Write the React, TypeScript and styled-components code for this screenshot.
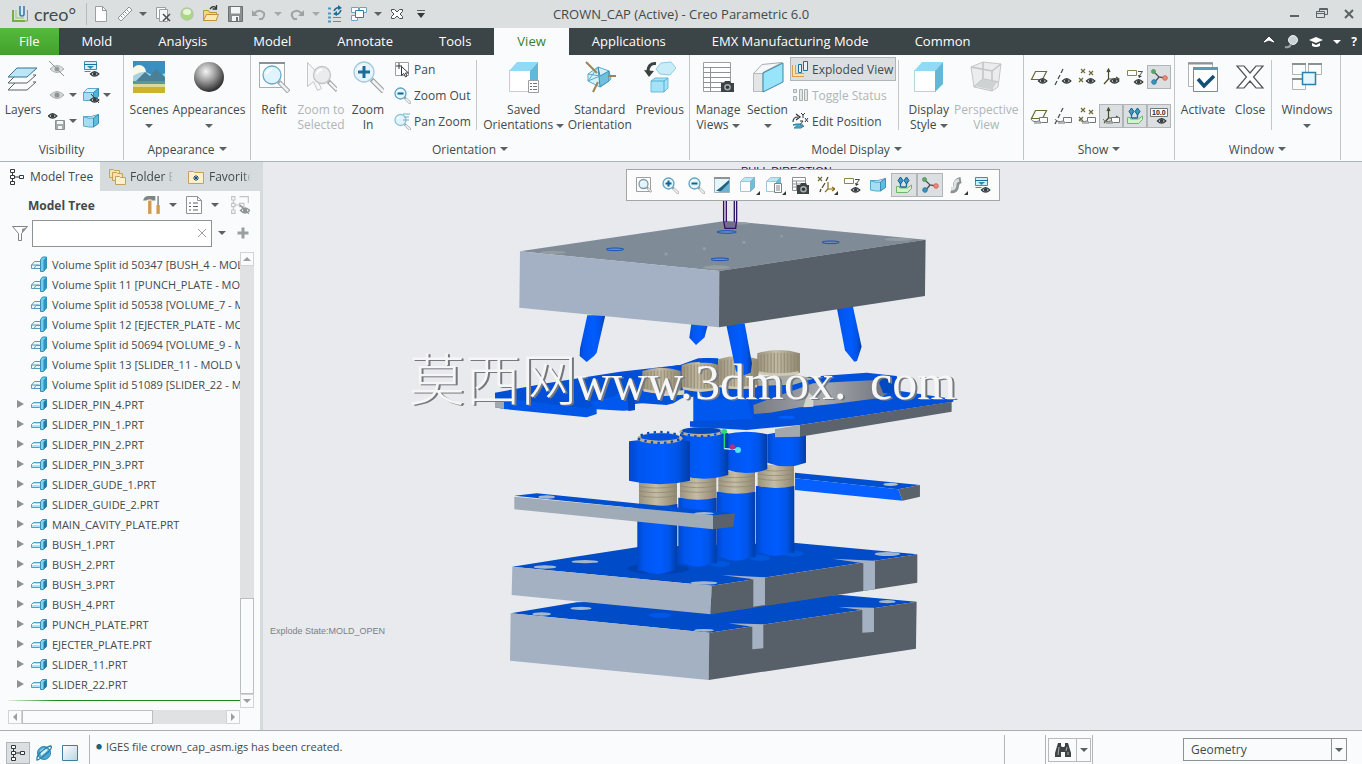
import React, { useState } from "react";
import styled, { createGlobalStyle, css } from "styled-components";

const GlobalStyle = createGlobalStyle`
  * {
    box-sizing: border-box;
  }

  body {
    margin: 0;
    font-family: "Open Sans", "Noto Sans", "Noto Sans CJK SC", sans-serif;
    font-size: 12px;
    line-height: 15px;
    color: #424a4c;
    background: #fafbfc;
  }

  button, input, select {
    font: inherit;
    color: inherit;
  }

  button {
    padding: 0;
    border: none;
    background: none;
  }

  svg {
    display: block;
    flex: none;
  }
`;

/* icons */

type IconProps = { size?: number; box?: number; children?: React.ReactNode };

const Icon = ({ size = 18, box = 18, children }: IconProps) => (
  <svg
    width={size}
    height={size}
    viewBox={`0 0 ${box} ${box}`}
    fill="none"
    stroke="#5b6264"
    aria-hidden="true"
  >
    {children}
  </svg>
);

const Big = ({ children }: { children: React.ReactNode }) => (
  <Icon size={32} box={32}>
    {children}
  </Icon>
);

const Eye = ({ x = 0, y = 0, color = "#333a3c" }) => (
  <g transform={`translate(${x} ${y})`} stroke={color}>
    <path d="M0.5 4Q4.500-0.800 8.800 4Q4.500 8.300 0.500 4Z" fill="#fff" strokeWidth="1.300" />
    <circle cx="4.600" cy="3.800" r="1.500" fill={color} />
  </g>
);

const Lens = ({ x = 0, y = 0, r = 5, grip = 6, color = "#6aaac8", fill = "#dff4fc" }) => (
  <g transform={`translate(${x} ${y})`}>
    <path d={`M${r * 0.75} ${r * 0.75}l${grip} ${grip}`} stroke="#9a9fa1" strokeWidth={r * 0.5} />
    <path d={`M${r * 0.75 + 1} ${r * 0.75 + 1}l${grip - 1.5} ${grip - 1.5}`} stroke="#f1f3f3" strokeWidth={r * 0.28} />
    <circle r={r} fill={fill} stroke={color} strokeWidth="1.300" />
    <path d={`M${-r * 0.6} ${-r * 0.1}a${r * 0.6} ${r * 0.6} 0 01${r * 0.6} ${-r * 0.5}`} stroke="#fff" strokeWidth={r * 0.2} />
  </g>
);

const Camera = ({ x = 0, y = 0 }) => (
  <g transform={`translate(${x} ${y})`} stroke="none">
    <path d="M0 3h3l1-2h5l1 2h3v9H0z" fill="#3d4345" />
    <circle cx="6.500" cy="7.300" r="3.300" fill="#aab0b2" />
    <circle cx="6.500" cy="7.300" r="1.800" fill="#33383a" />
  </g>
);

const Cross = ({ x, y, color = "#6e6a35" }: { x: number; y: number; color?: string }) => (
  <path d={`M${x} ${y}l4 4m0-4l-4 4`} stroke={color} strokeWidth="1.200" />
);

const CreoLogo = () => (
  <Icon>
    <path d="M2 5v11h12" stroke="#6fb244" strokeWidth="2" />
    <path d="M5 5v8h8" stroke="#a9d08f" strokeWidth="1.500" />
    <path d="M9 1v8a2 2 0 004 0V1" stroke="#3a7fa5" strokeWidth="1.600" fill="#d2ebf5" />
    <path d="M16.500 5v11H12" stroke="#6fb244" />
  </Icon>
);

const FileIcon = () => (
  <Icon>
    <path d="M3.500 1.500h7l4 4v11h-11z" fill="#fff" stroke="#9aa0a2" />
    <path d="M10.500 1.500v4h4" stroke="#8d9395" />
  </Icon>
);

const RulerIcon = () => (
  <Icon>
    <path d="M2 13L13 2l3 3L5 16z" fill="#fff" stroke="#8d9395" />
    <path d="M5 11l1.500 1.500M7 9l1.500 1.500M9 7l1.500 1.500M11 5l1.500 1.500" stroke="#7e8587" />
  </Icon>
);

const CloseFileIcon = () => (
  <Icon>
    <path d="M2.500 2.500h9v11h-9z" fill="#fff" stroke="#9aa0a2" />
    <path d="M5.500 4.500h8v12h-8z" fill="#f6f8f8" stroke="#9aa0a2" />
    <path d="M9 9l7 7m0-7l-7 7" stroke="#4a5052" strokeWidth="1.500" />
  </Icon>
);

const RegenIcon = () => (
  <Icon>
    <circle cx="9" cy="9" r="6" fill="#a9d97f" stroke="#b3c9a3" strokeWidth="1.500" />
    <ellipse cx="9" cy="7" rx="4" ry="3" fill="#e6f5d8" stroke="none" />
  </Icon>
);

const OpenIcon = () => (
  <Icon>
    <path d="M1.500 15.500v-10h5l1 2h7v8z" fill="#f5d48a" stroke="#c4923a" />
    <path d="M1.500 15.500l3-6h12l-2.500 6z" fill="#fce9b8" stroke="#c4923a" />
    <path d="M8 4q3-4 6-1M14.500 0v4h-4" stroke="#33383a" strokeWidth="1.300" />
  </Icon>
);

const SaveIcon = () => (
  <Icon>
    <path d="M2.500 1.500h14v15h-14z" fill="#8a9092" stroke="#6b7274" />
    <path d="M5 2h9v6.500H5zM6 11h7v5H6z" fill="#f4f6f6" stroke="none" />
    <path d="M10 12h2v4h-2z" fill="#6b7274" stroke="none" />
  </Icon>
);

const UndoIcon = ({ flip = false }) => (
  <Icon>
    <g transform={flip ? "translate(18 0) scale(-1 1)" : undefined} stroke="#9ea4a6" strokeWidth="2">
      <path d="M4 9q5-6 10-1 1 3-2 6H9" />
      <path d="M2 5v6h6z" fill="#9ea4a6" stroke="none" />
    </g>
  </Icon>
);

const RegenListIcon = () => (
  <Icon>
    <path d="M2 3.500h3M2 8.500h3M2 12.500h3M2 16.500h3" stroke="#4a98bd" strokeWidth="2" />
    <path d="M7 12.500h8M7 16.500h8" stroke="#7d8486" />
    <path d="M8 6q2-4 5-3M15 5q-2 5-5 4" stroke="#1b6d97" strokeWidth="1.600" />
    <path d="M12 0l4 3-4 2zM11 6l-4 3 4 2z" fill="#1b6d97" stroke="none" />
  </Icon>
);

const WindowsSmallIcon = () => (
  <Icon>
    <path d="M1.500 2.500h7v5h-7zM1.500 10.500h6v5h-6z" fill="#fff" stroke="#6aa6c2" />
    <path d="M9.500 2.500h7v5h-7z" fill="#fff" stroke="#6aa6c2" />
    <path d="M5.500 5.500h8v7h-8z" fill="#fff" stroke="#2b7fa8" />
  </Icon>
);

const CloseXIcon = () => (
  <Icon>
    <path d="M3.500 4.500h3L9 7l2.500-2.500h3v2L12 9l2.500 2.500v2h-3L9 11l-2.500 2.500h-3v-2L6 9 3.500 6.500z" fill="#fff" stroke="#4a5052" />
  </Icon>
);

const LayersIcon = () => (
  <Big>
    <path d="M1 29h19l9-8h-3M1 29l7-7" />
    <path d="M1 22h19l9-8h-3M1 22l7-7" fill="#fbfcfc" />
    <path d="M1 16l9-9h20l-10 9z" fill="#b9e7f8" stroke="#3b7390" />
  </Big>
);

const HideIcon = () => (
  <Icon>
    <path d="M2 9q7-7 14 0-7 7-14 0z" fill="#dcdfdf" stroke="#a9aeb0" />
    <circle cx="9" cy="9" r="2.500" fill="#9aa0a2" stroke="none" />
    <path d="M1 1l15 15" stroke="#8d9395" />
  </Icon>
);

const ShowIcon = () => (
  <Icon>
    <path d="M2 9q7-7 14 0-7 7-14 0z" fill="#d0d4d4" stroke="#a9aeb0" />
    <circle cx="9" cy="9" r="2.500" fill="#8d9395" stroke="none" />
  </Icon>
);

const EyeSaveIcon = () => (
  <Icon>
    <Eye x={0} y={0} />
    <path d="M7.500 8.500h9v9h-9z" fill="#a4a9ab" stroke="#8a9092" />
    <path d="M9 9h6v3H9zM10 14h4v3h-4z" fill="#f4f6f6" stroke="none" />
  </Icon>
);

const StatusEyeIcon = () => (
  <Icon>
    <path d="M2.500 1.500h12v8h-12z" fill="#d5eff9" stroke="#3a8fb5" />
    <path d="M2 4h13v1H2z" fill="#1d6f99" stroke="none" />
    <path d="M5 6h7l-3.500 3z" fill="#2b8fbd" stroke="none" />
    <path d="M2.500 11.500h6" stroke="#3a8fb5" />
    <Eye x={8} y={10} />
  </Icon>
);

const CurvedBlockIcon = () => (
  <Icon>
    <path d="M1.500 4.500q5 2.500 10 1.500v9q-5 .5-10-1z" fill="#a5def4" stroke="#5aa9c9" />
    <path d="M1.500 4.500q7 1 15-2l-5 3.500q-5 1-10-1.500z" fill="#e3f6fc" stroke="#5aa9c9" />
    <path d="M11.500 6l5-3.500v9l-5 3.500z" fill="#62bcdd" stroke="#3a8fb5" />
  </Icon>
);

const BlockHiddenIcon = () => (
  <Icon>
    <path d="M1.500 6.500h10v8h-10z" fill="#a5def4" stroke="#5aa9c9" />
    <path d="M1.500 6.500l4-4h11l-5 4z" fill="#d5f1fb" stroke="#5aa9c9" />
    <path d="M11.500 6.500l5-4v8l-5 4z" fill="#4fb2d8" stroke="#3a8fb5" />
    <Eye x={8} y={10} />
    <path d="M9 8l8 9" stroke="#333a3c" />
  </Icon>
);

const ScenesIcon = () => (
  <Big>
    <g stroke="none">
      <path d="M0 0h32v32H0z" fill="#3a8fc0" />
      <circle cx="6" cy="11" r="7" fill="#fdf8e4" />
      <path d="M0 15q10-7 17-2t15-1v9H0z" fill="#a9d3e2" />
      <path d="M3 20l9-9 5 4 6-7 9 8v6H3z" fill="#4a7f98" />
      <path d="M0 20h32v5H0z" fill="#5e9a8c" />
      <path d="M0 23h32v9H0z" fill="#c9b32f" />
      <path d="M0 23h32v3H0z" fill="#d9dc98" />
    </g>
  </Big>
);

const SphereIcon = () => (
  <Big>
    <defs>
      <radialGradient id="ball" cx="40%" cy="32%" r="66%">
        <stop offset="0" stopColor="#f4f4f4" />
        <stop offset="0.500" stopColor="#9a9a9a" />
        <stop offset="1" stopColor="#333" />
      </radialGradient>
    </defs>
    <circle cx="16" cy="16" r="15" fill="url(#ball)" stroke="none" />
  </Big>
);

const RefitIcon = () => (
  <Big>
    <path d="M1.500 1.500h25v25h-25z" fill="#fcfdfd" stroke="#a9aeb0" />
    <path d="M1 2h26" stroke="#8b9193" strokeWidth="2" />
    <Lens x={14} y={14} r={9} grip={10} />
  </Big>
);

const ZoomSelectedIcon = () => (
  <Big>
    <path d="M2.500 1.500v24l6-5 4 9 4-2-4-8h7z" fill="#f5f6f6" stroke="#c3c7c9" />
    <Lens x={17} y={14} r={8.500} grip={9} color="#c0c4c6" fill="#ebeded" />
  </Big>
);

const ZoomInIcon = () => (
  <Big>
    <Lens x={12} y={11} r={10} grip={14} color="#a3cbdc" fill="#e6f4fa" />
    <path d="M12 5v12M6 11h12" stroke="#1d6b97" strokeWidth="3" />
  </Big>
);

const PanIcon = () => (
  <Icon>
    <path d="M2.500 2.500h13v13h-13z" fill="#fff" stroke="#9aa0a2" />
    <path d="M6 3v6M3 6h6" stroke="#33383a" />
    <path d="M8.500 6.500v9l2.300-2 1.700 3.500 1.500-1-1.500-3h3z" fill="#fff" stroke="#33383a" />
  </Icon>
);

const ZoomOutIcon = () => (
  <Icon>
    <Lens x={7.500} y={7.500} r={5.500} grip={6} color="#5fa3c2" fill="#e3f5fc" />
    <path d="M4.500 7.500h6" stroke="#14618c" strokeWidth="2" />
  </Icon>
);

const ZoomInSmallIcon = () => (
  <Icon>
    <Lens x={7.500} y={7.500} r={5.500} grip={6} color="#5fa3c2" fill="#e3f5fc" />
    <path d="M4.500 7.500h6M7.500 4.500v6" stroke="#14618c" strokeWidth="2" />
  </Icon>
);

const PanZoomIcon = () => (
  <Icon>
    <Lens x={7.500} y={8} r={5.500} grip={6} color="#8cc3d9" fill="#dff4fc" />
    <path d="M10 2h7M11 5h5M10 8h6" stroke="#6bb0cc" />
  </Icon>
);

const RefitSmallIcon = () => (
  <Icon>
    <path d="M1.500 1.500h14v14h-14z" fill="#fff" stroke="#9aa0a2" />
    <Lens x={8.500} y={8} r={4.500} grip={4.500} color="#7f9aa5" />
  </Icon>
);

const CubeShape = () => (
  <g stroke="none">
    <path d="M1.500 9.500h21v21h-21z" fill="#fff" stroke="#b9d3dd" />
    <path d="M1 10l8-9h21l-8 9z" fill="#8fdaf4" />
    <path d="M22 10l8-9v22l-8 8z" fill="#62b8d9" />
  </g>
);

const SavedOrientationIcon = () => (
  <Big>
    <CubeShape />
    <path d="M20.500 19.500h10v12h-10z" fill="#fff" stroke="#9aa0a2" />
    <path d="M22 22.500h2M25 22.500h4M22 25.500h2M25 25.500h4M22 28.500h2M25 28.500h4" stroke="#6f7678" />
  </Big>
);

const DisplayStyleIcon = () => (
  <Big>
    <CubeShape />
  </Big>
);

const StandardOrientationIcon = () => (
  <Big>
    <path d="M4 13l10-7 11 4 2 8-11 8-12-6z" fill="#d5f2fb" stroke="#5aa9c9" />
    <path d="M14 6l2 9 9-5v10l-9 6z" fill="#6fbfdd" stroke="#3a8fb5" />
    <path d="M4 13l12 2M4 20l10-14M16 15l-12 5" stroke="#5aa9c9" />
    <path d="M2 1l11 11M9 31l5-10M24 15h9" stroke="#9b8457" strokeWidth="2" />
  </Big>
);

const PreviousIcon = () => (
  <Big>
    <path d="M12 8l5-6 10-1 5 6-6 7-10-1z" fill="#c8edf9" stroke="#8fcbe2" />
    <path d="M7 20l4-3h13v10l-4 4H7z" fill="#a5e2f7" stroke="#6dbbd9" />
    <path d="M7 20h13v11M20 20l4-3" stroke="#55afd2" />
    <path d="M12 2.500Q4 2 4 11" stroke="#3c4244" strokeWidth="3" />
    <path d="M0 9l10 1-5 6z" fill="#3c4244" stroke="none" />
  </Big>
);

const ManageViewsIcon = () => (
  <Big>
    <path d="M1.500 1.500h27v29h-27z" fill="#fff" stroke="#9aa0a2" />
    <path d="M1 6.500h28M1 11.500h28M1 16.500h28M1 21.500h28M1 26.500h28M8.500 6v24" stroke="#8d9395" />
    <Camera x={19} y={19} />
  </Big>
);

const SectionIcon = () => (
  <Big>
    <path d="M1.500 12.500L10 3.500l20-2-19 10v19H1.500z" fill="#f6f7f8" stroke="#a6abad" />
    <path d="M1.500 12.500H11v18H1.500z" fill="#e3e5e7" stroke="#b6bbbd" />
    <path d="M11 12l20-10v19L11 31z" fill="#97e4fb" stroke="#3b85a6" />
  </Big>
);

const ExplodedIcon = () => (
  <Icon>
    <path d="M3 5v10h10" stroke="#d2a050" strokeWidth="4" />
    <path d="M3 5v10h10" stroke="#fbe3a8" strokeWidth="2" />
    <path d="M7.500 4.500h3v8h-3zM12.500 1.500h4v9h-4z" fill="#e3f5fc" stroke="#1b6d97" />
  </Icon>
);

const ToggleStatusIcon = () => (
  <Icon>
    <path d="M2.500 3.500h3v3h-3zM2.500 10.500h3v4h-3zM8.500 3.500h3v11h-3zM13.500 3.500h3v11h-3z" fill="#e3e5e6" stroke="#a9aeb0" />
  </Icon>
);

const EditPositionIcon = () => (
  <Icon>
    <path d="M2 10q0-5 5-5M5 2l4 3-4 3" stroke="#33383a" strokeWidth="1.200" />
    <path d="M14 6l3 4m0-4l-3 4M10 1l2 2 2-2M12 3v3M9 9h3l-3 4h3" stroke="#33383a" />
    <path d="M2 13l3-1h5l-2 1zM3 16l3-2h7l-3 2z" fill="#5fbce0" stroke="#2b7fa8" />
  </Icon>
);

const PerspectiveIcon = () => (
  <Big>
    <path d="M1 6L13 1l18 2-3 23-6 4L4 26z" fill="#ebecec" stroke="#c3c7c9" />
    <path d="M1 6l21 4 9-7M22 10v20M13 1v17l15 3M4 26l9-8" stroke="#c0c4c6" strokeWidth="1.500" />
    <path d="M5 25l8-7 14 3-5 8z" fill="#cfd2d3" stroke="none" />
  </Big>
);

const ShowPlane = () => <path d="M5.500 3.500h11l-4 8H1.500z" stroke="#6e6a35" strokeWidth="1.200" />;
const ShowAxis = () => <path d="M9 1L7 5M6 7l-2 4M3 13l-2 4" stroke="#4a5052" strokeWidth="1.300" />;
const ShowPoints = () => (
  <>
    <Cross x={3} y={1} />
    <Cross x={11} y={3} />
    <Cross x={1} y={10} />
  </>
);
const ShowCsys = () => (
  <path d="M6.500 2v9H16M6.500 11L2 16M5 4l1.500-3L8 4M14 9l3 2-3 2" stroke="#4a4d2c" strokeWidth="1.200" />
);
const TagMark = () => (
  <>
    <path d="M9.500 10.500h8v5h-6l-2-1z" fill="#fff" stroke="#6f7678" />
    <path d="M1 12q2 4 8 2M4 16h7" stroke="#6f7678" />
  </>
);

const NoteEyeIcon = () => (
  <Icon>
    <path d="M1.500 2.500h9v5h-9z" fill="#fff" stroke="#8a8650" />
    <path d="M12 3.500h4.500l-3 4" stroke="#4a5052" />
    <path d="M12 7l4 1-3 2z" fill="#33383a" stroke="none" />
    <Eye x={8} y={10} />
  </Icon>
);

const SpinCenterIcon = () => (
  <Icon>
    <path d="M3 3l6 6 6 1M9 9l-5 6" stroke="#4a5052" strokeWidth="1.300" />
    <circle cx="3.500" cy="3.500" r="2" fill="#58a868" stroke="#5f9a6a" />
    <circle cx="4" cy="14" r="2.300" fill="#3a93bd" stroke="#2b7fa8" />
    <circle cx="15" cy="10" r="2.300" fill="#ee8a76" stroke="#cf6a57" />
  </Icon>
);

const PullIcon = () => (
  <Icon>
    <path d="M1.500 10.500v6h11l4-4v-3.500l-4 3h-8v-1.500z" fill="#d3f2cb" stroke="#6fb56f" />
    <path d="M5.500 11V6M11.500 11V6M5.500 11h6" stroke="#1d6b97" strokeWidth="1.300" />
    <path d="M5.500 1L3 4.500 5.500 8 8 4.500zM11.500 1L9 4.500 11.500 8 14 4.500z" fill="#3d97bf" stroke="#0f5f8a" />
  </Icon>
);

const DimIcon = () => (
  <Icon>
    <path d="M0.500 1.500h17v8H.5z" fill="#fff" stroke="#6f7678" />
    <text x="2" y="8" fontSize="7" fontWeight="700" fill="#222" stroke="none" fontFamily="Liberation Sans, sans-serif">
      10.0
    </text>
    <Eye x={7} y={10} />
  </Icon>
);

const ActivateIcon = () => (
  <Big>
    <path d="M1.500 1.500h24v24h-24z" fill="#fff" stroke="#b0b5b7" />
    <path d="M1 2.500h25" stroke="#8d9395" strokeWidth="2" />
    <path d="M6.500 6.500h24v24h-24z" fill="#fff" stroke="#5d94ae" />
    <path d="M6 7.500h25" stroke="#5d9ab8" strokeWidth="3" />
    <path d="M11 18l6 7 10-10" stroke="#144e74" strokeWidth="3.500" />
  </Big>
);

const CloseBigIcon = () => (
  <Big>
    <path d="M3 5h7l6 7 6-7h7L19.500 16 29 27h-7l-6-7-6 7H3l9.500-11z" fill="#fff" stroke="#4f5658" strokeWidth="1.200" />
  </Big>
);

const WindowsIcon = () => (
  <Big>
    <path d="M1.500 2.500h13v11h-13zM17.500 2.500h13v11h-13zM1.500 17.500h13v11h-13z" fill="#fbfcfc" stroke="#b0b5b7" />
    <path d="M1 3h14M17 3h14M1 18h14" stroke="#8b9193" strokeWidth="2" />
    <path d="M11.500 11.500h13v12h-13z" fill="#e5f6fc" stroke="#2b7fa8" strokeWidth="1.500" />
  </Big>
);

const ShadeIcon = () => (
  <Icon>
    <path d="M1.500 1.500h15v15h-15z" fill="#e6f5fa" stroke="#9fb4bd" />
    <path d="M1 1h16v2H1z" fill="#8d9395" stroke="none" />
    <path d="M16 6v10H5z" fill="#6db3cf" stroke="none" />
    <path d="M8 11l8-7v3l-8 8H3z" fill="#205f80" stroke="none" />
  </Icon>
);

const MiniCube = ({ list = false }) => (
  <Icon>
    <path d="M1.500 5.500h10v10h-10z" fill="#fff" stroke="#a3c6d4" />
    <path d="M1.500 5.500l4-4h10l-4 4z" fill="#b9e7f7" stroke="#a3c6d4" />
    <path d="M11.500 5.500l4-4v10l-4 4z" fill="#70bddb" stroke="#7fb5ca" />
    {list && (
      <>
        <path d="M9.500 7.500h7v9h-7z" fill="#fff" stroke="#7d8486" />
        <path d="M11 10h4M11 12h4M11 14h4" stroke="#7d8486" />
      </>
    )}
  </Icon>
);

const ManageSmallIcon = () => (
  <Icon>
    <path d="M1.500 1.500h13v13h-13zM1 5h14M1 8h14M1 11h14M5.500 5v10" fill="#fff" stroke="#8d9395" />
    <Camera x={6} y={6} />
  </Icon>
);

const DatumIcon = () => (
  <Icon>
    <Cross x={1} y={1} />
    <path d="M11 1L9 5M8 7l-3 5M4 13l-1 3" stroke="#4a4d2c" strokeWidth="1.300" />
    <path d="M11 6v7h6M11 13l-3 3M15 11l3 2-3 2" stroke="#8a6d20" strokeWidth="1.200" />
  </Icon>
);

const SnakeIcon = () => (
  <Icon>
    <path d="M4 14q5 1 5-4t5-6" stroke="#8d9294" strokeWidth="6" />
    <path d="M4 13q4 0 4-4t4-5" stroke="#dfe1e1" strokeWidth="3" />
  </Icon>
);

const TreeIcon = () => (
  <Icon>
    <path d="M2.500 1.500h4v3h-4zM2.500 7.500h4v3h-4zM2.500 13.500h4v3h-4zM11.500 7.500h4v3h-4z" fill="#fff" stroke="#33383a" />
    <path d="M4.500 5v2M4.500 11v2M7 9h4" stroke="#33383a" />
  </Icon>
);

const FoldersIcon = ({ star = false }) => (
  <Icon>
    {!star && <path d="M1.500 9.500v-8h4l1 1h5v7z" fill="#f9e3ad" stroke="#c4a05a" />}
    {!star && <path d="M4.500 12.500v-8h4l1 1h5v7z" fill="#f9e3ad" stroke="#c4a05a" />}
    <path d={star ? "M1.500 15.500v-12h5l1 1h9v11z" : "M7.500 16.500v-8h4l1 1h5v7z"} fill="#fdf0cb" stroke="#c4a05a" />
    {star && <path d="M9 7v6M6 10h6M7 8l4 4M11 8l-4 4" stroke="#144e74" />}
  </Icon>
);

const ToolsIcon = () => (
  <Icon size={20}>
    <path d="M1 5q1-4 5-4h6v4H8.500v-1H5.500L4 5z" fill="#7d8486" stroke="none" />
    <path d="M7 5v12" stroke="#cf9a4c" strokeWidth="3" />
    <path d="M14.500 1v8" stroke="#8d9395" strokeWidth="1.500" />
    <path d="M14.500 9v8" stroke="#cf9a4c" strokeWidth="3" />
  </Icon>
);

const ListPageIcon = () => (
  <Icon>
    <path d="M1.500 0.500h11l4 4v13h-15z" fill="#fff" stroke="#8d9395" />
    <path d="M4 7h2M8 7h5M4 10.500h2M8 10.500h5M4 14h2M8 14h5" stroke="#5b6264" />
    <path d="M12.500.5v4h4" stroke="#8d9395" />
  </Icon>
);

const TreeHiddenIcon = () => (
  <Icon size={20}>
    <path d="M1.500 1.500h3v3h-3zM1.500 7.500h3v3h-3zM1.500 13.500h3v3h-3zM8.500 1.500h8v6M8.500 7.500h4v3h-4zM5 9h3M3 5v2M3 11v2" stroke="#c0c4c6" />
    <Eye x={9} y={10} color="#8d9395" />
    <path d="M9 9l8 8" stroke="#8d9395" />
  </Icon>
);

const FunnelIcon = () => (
  <Icon>
    <path d="M1.500 2.500h15l-6 7v7h-3v-7z" fill="#fff" stroke="#7d8486" />
    <path d="M11 5l5-2-5 6v7z" fill="#8d9395" stroke="none" />
  </Icon>
);

const SplitIcon = () => (
  <Icon size={16} box={16}>
    <path d="M.5 9l3-3.500h6v7h-9z" fill="#eef7fb" stroke="#5d97b3" />
    <path d="M.5 9h8M3 12.500l2-3h4" stroke="#5d97b3" />
    <path d="M9.500 3.500l2-2.500h4v11l-3 3.500h-3z" fill="#6fcdee" stroke="#3a8fb5" />
    <path d="M12.500 4l3-3v11l-3 3.500z" fill="#2f93bf" stroke="none" />
  </Icon>
);

const PartIcon = () => (
  <Icon size={16} box={16}>
    <path d="M.5 8.500l2-2h7v4l-1 1h-8z" fill="#a9e6fa" stroke="#4f9fc2" />
    <path d="M1 8.500h8" stroke="#f2fbfe" />
    <path d="M9.500 5.500l2-2h4v7l-3 3h-3z" fill="#7fd4f0" stroke="#3a8fb5" />
    <path d="M12.500 6l3-2.500v7l-3 3z" fill="#2278a3" stroke="none" />
  </Icon>
);

const BrowserIcon = () => (
  <Icon>
    <circle cx="9" cy="9" r="6.500" fill="#4aa8d6" stroke="#3585ab" />
    <path d="M5 7q4-5 8-1l-3 3-4 3z" fill="#d5f0fa" stroke="none" />
    <path d="M2 16q-1-4 5-9t9-5q2 2-5 8t-9 6z" stroke="#2b7fa8" strokeWidth="1.300" />
  </Icon>
);

const SquareIcon = () => (
  <Icon>
    <defs>
      <linearGradient id="pane" x2="1" y2="1">
        <stop offset="0" stopColor="#fff" />
        <stop offset="1" stopColor="#b7d5e2" />
      </linearGradient>
    </defs>
    <path d="M1.500 1.500h15v15h-15z" fill="url(#pane)" stroke="#3f7f9e" />
  </Icon>
);

const BinocularsIcon = () => (
  <Icon>
    <path d="M4 2h3v3l1 1h2l1-1V2h3l3 10v4h-6v-5H7v5H1v-4z" fill="#3d4345" stroke="none" />
    <path d="M5 6l-1 8M13 6l-1 4M14 11v3" stroke="#a9aeb0" />
  </Icon>
);

/* title bar */

const Page = styled.div`
  display: flex;
  flex-direction: column;
  height: 100vh;
  min-width: 1340px;
`;

const TitleBar = styled.header`
  display: grid;
  grid-template-columns: 1fr auto 1fr;
  align-items: center;
  height: 28px;
  background: #dbdfe0;
`;

const QuickTools = styled.div`
  display: flex;
  align-items: center;
  padding-left: 11px;
`;

const Brand = styled.span`
  display: flex;
  align-items: center;
  gap: 5px;
  width: 76px;
  height: 22px;
  border-right: 1px solid #b6bbbd;
  font-family: Lato, sans-serif;
  font-size: 18px;
`;

const ToolButton = styled.button<{ $w?: number }>`
  display: flex;
  align-items: center;
  justify-content: center;
  width: ${({ $w }) => $w || 24}px;
  height: 24px;
`;

const Caret = styled.span<{ $light?: boolean }>`
  display: inline-block;
  border: 4px solid transparent;
  border-top-color: ${({ $light }) => ($light ? "#a4aaac" : "#5b6264")};
  border-bottom-width: 0;
  vertical-align: middle;
`;

const TitleText = styled.h1`
  margin: 0;
  font-size: 13px;
  font-weight: 400;
`;

const WindowControls = styled.div`
  display: flex;
  justify-content: flex-end;
`;

/* tabs */

const TabBar = styled.nav`
  display: flex;
  height: 27px;
  background: #3b4446;
`;

const Tab = styled.button<{ $kind?: "file" | "active" }>`
  padding: 0 23px;
  font-size: 13px;
  color: #fff;

  ${({ $kind }) =>
    $kind === "file" &&
    css`
      padding: 0 19px;
      background: linear-gradient(#55bb3c, #43a02c);
    `}

  ${({ $kind }) =>
    $kind === "active" &&
    css`
      color: #3f7d2c;
      background: #fafbfc;
    `}
`;

const TabTools = styled.div`
  display: flex;
  align-items: center;
  margin-left: auto;
  color: #fff;
`;

/* ribbon */

const Ribbon = styled.div`
  display: flex;
  flex: none;
  height: 107px;
  padding-bottom: 1px;
  border-bottom: 1px solid #aab4b8;
  background: #fafbfc;
`;

const Group = styled.section<{ $w: number }>`
  display: flex;
  flex-direction: column;
  flex: none;
  width: ${({ $w }) => $w}px;
  padding-top: 1px;
  border-right: 1px solid #bfc4c6;
`;

const GroupBody = styled.div`
  display: flex;
  height: 83px;
`;

const GroupLabel = styled.div`
  display: flex;
  align-items: center;
  justify-content: center;
  gap: 4px;
  height: 20px;
`;

const Divider = styled.span`
  width: 1px;
  height: 70px;
  margin: 4px 2px 0;
  background: #c3c8ca;
`;

const BigButton = styled.button<{ $w: number }>`
  display: flex;
  flex-direction: column;
  align-items: center;
  width: ${({ $w }) => $w}px;
  padding-top: 5px;
  white-space: nowrap;

  > svg {
    margin-bottom: 9px;
  }

  &:disabled {
    color: #b0b5b7;
  }
`;

const Column = styled.div`
  display: flex;
  flex-direction: column;
  align-items: flex-start;
  gap: 2px;
  padding: 1px 0 0 1px;
`;

const SmallButton = styled.button<{ $pressed?: boolean }>`
  display: flex;
  align-items: center;
  gap: 3px;
  height: 24px;
  padding-right: 2px;
  border: 1px solid transparent;
  white-space: nowrap;

  ${({ $pressed }) =>
    $pressed &&
    css`
      border-color: #b0b5b7;
      background: #dcdfe2;
    `}

  &:disabled {
    color: #b0b5b7;
  }
`;

const ShowGrid = styled.div`
  display: grid;
  grid-template-columns: repeat(6, 24px);
  grid-auto-rows: 24px;
  row-gap: 15px;
  padding: 9px 3px 0;
`;

const IconButton = styled.button<{ $pressed?: boolean }>`
  display: flex;
  align-items: center;
  justify-content: center;
  border: 1px solid ${({ $pressed }) => ($pressed ? "#b0b5b7" : "transparent")};
  background: ${({ $pressed }) => ($pressed ? "#dcdfe2" : "none")};
`;

type BigProps = {
  w: number;
  icon: React.ReactNode;
  lines: string[];
  caret?: "inline" | "below";
  disabled?: boolean;
};

const BigTool = ({ w, icon, lines, caret, disabled }: BigProps) => (
  <BigButton $w={w} disabled={disabled}>
    {icon}
    {lines.map((line, i) => (
      <span key={line}>
        {line}
        {caret === "inline" && i === lines.length - 1 && (
          <>
            {" "}
            <Caret />
          </>
        )}
      </span>
    ))}
    {caret === "below" && (
      <span>
        <Caret />
      </span>
    )}
  </BigButton>
);

const withEye = (shape: React.ReactNode) => (
  <Icon>
    {shape}
    <Eye x={8} y={9} />
  </Icon>
);

const withTag = (shape: React.ReactNode) => (
  <Icon>
    {shape}
    <TagMark />
  </Icon>
);

const showTools: [string, React.ReactNode, boolean][] = [
  ["Plane Display", withEye(<ShowPlane />), false],
  ["Axis Display", withEye(<ShowAxis />), false],
  ["Point Display", withEye(<ShowPoints />), false],
  ["Csys Display", withEye(<ShowCsys />), false],
  ["Annotation Display", <NoteEyeIcon />, false],
  ["Spin Center", <SpinCenterIcon />, true],
  ["Plane Tags", withTag(<ShowPlane />), false],
  ["Axis Tags", withTag(<ShowAxis />), false],
  ["Point Tags", withTag(<ShowPoints />), false],
  ["Csys Tags", withTag(<ShowCsys />), true],
  ["Pull Direction", <PullIcon />, true],
  ["Dimensions", <DimIcon />, true]
];

/* side panel */

const Workspace = styled.main`
  display: flex;
  flex: 1;
  min-height: 0;
`;

const SidePanel = styled.aside`
  display: flex;
  flex-direction: column;
  flex: none;
  width: 263px;
  border-right: 3px solid #d5dadd;
`;

const PanelTabs = styled.div`
  display: flex;
  flex: none;
  height: 29px;
  background: #d6dcde;
`;

const PanelTab = styled.button<{ $w: number; $active?: boolean }>`
  display: flex;
  align-items: center;
  gap: 4px;
  flex: none;
  width: ${({ $w }) => $w}px;
  padding: 0 6px 0 8px;
  white-space: nowrap;
  background: ${({ $active }) => ($active ? "#fafbfc" : "none")};
`;

const PanelTabText = styled.span<{ $fade?: boolean }>`
  overflow: hidden;
  mask-image: ${({ $fade }) => ($fade ? "linear-gradient(to left, transparent, #000 8px)" : "none")};
`;

const PanelHead = styled.div`
  display: flex;
  align-items: center;
  flex: none;
  height: 28px;
  padding: 0 4px 0 28px;

  h2 {
    flex: 1;
    margin: 0;
    font-size: 12px;
  }
`;

const FilterRow = styled.div`
  display: flex;
  align-items: center;
  flex: none;
  height: 28px;
  padding: 0 6px 0 11px;
`;

const FilterBox = styled.div`
  display: flex;
  align-items: center;
  flex: 1;
  height: 27px;
  margin-left: 3px;
  border: 1px solid #8d9395;
  background: #fff;

  input {
    flex: 1;
    min-width: 0;
    border: none;
    outline: none;
    background: none;
  }
`;

const TreeArea = styled.div`
  display: grid;
  flex: 1;
  grid-template-columns: minmax(0, 1fr) 14px;
  grid-template-rows: minmax(0, 1fr) 14px;
  row-gap: 2px;
  min-height: 0;
  padding: 5px 6px 6px 8px;
`;

const Tree = styled.ul`
  margin: 0;
  padding: 2px 0 0;
  overflow: hidden;
  list-style: none;
  font-size: 11px;
`;

const Row = styled.li`
  display: flex;
  align-items: center;
  height: 20px;
  white-space: nowrap;
`;

const Expander = styled.span<{ $hidden?: boolean }>`
  margin: 0 7px 0 9px;
  border: 4px solid transparent;
  border-right-width: 0;
  border-left: 7px solid #8d9395;
  visibility: ${({ $hidden }) => ($hidden ? "hidden" : "visible")};
`;

const RowLabel = styled.span`
  margin-left: 5px;
`;

const InsertLine = styled.li`
  height: 1px;
  margin-top: 6px;
  background: linear-gradient(to right, #e3f0e0, #1c8a1c 20%);
`;

const Scrollbar = styled.div<{ $vertical?: boolean }>`
  display: flex;
  flex-direction: ${({ $vertical }) => ($vertical ? "column" : "row")};
  background: #dfe1e2;
`;

const ScrollEnd = styled.button`
  display: flex;
  align-items: center;
  justify-content: center;
  flex: none;
  width: 14px;
  height: 14px;
  border: 1px solid #d0d4d5;
  background: #fafbfc;
`;

const Thumb = styled.span<{ $grow: number }>`
  flex: ${({ $grow }) => $grow};
  border: 1px solid #b9bec0;
  background: #fafbfc;
`;

const Track = styled.span<{ $grow: number }>`
  flex: ${({ $grow }) => $grow};
`;

const Arrow = ({ turn }: { turn: number }) => (
  <Icon size={8} box={8}>
    <path d="M0 2h8L4 6z" fill="#9aa0a2" stroke="none" transform={`rotate(${turn} 4 4)`} />
  </Icon>
);

const splits = [
  "Volume Split id 50347 [BUSH_4 - MOLD VOLUME]",
  "Volume Split 11 [PUNCH_PLATE - MOLD VOLUME]",
  "Volume Split id 50538 [VOLUME_7 - MOLD VOLUME]",
  "Volume Split 12 [EJECTER_PLATE - MOLD VOLUME]",
  "Volume Split id 50694 [VOLUME_9 - MOLD VOLUME]",
  "Volume Split 13 [SLIDER_11 - MOLD VOLUME]",
  "Volume Split id 51089 [SLIDER_22 - MOLD VOLUME]"
];

const parts = [
  "SLIDER_PIN_4.PRT",
  "SLIDER_PIN_1.PRT",
  "SLIDER_PIN_2.PRT",
  "SLIDER_PIN_3.PRT",
  "SLIDER_GUDE_1.PRT",
  "SLIDER_GUIDE_2.PRT",
  "MAIN_CAVITY_PLATE.PRT",
  "BUSH_1.PRT",
  "BUSH_2.PRT",
  "BUSH_3.PRT",
  "BUSH_4.PRT",
  "PUNCH_PLATE.PRT",
  "EJECTER_PLATE.PRT",
  "SLIDER_11.PRT",
  "SLIDER_22.PRT"
];

/* graphics window */

const Viewport = styled.section`
  position: relative;
  flex: 1;
  min-width: 0;
  overflow: hidden;
  background: #e8eaee;

  > svg {
    width: 100%;
    height: 100%;
  }
`;

const FloatingBar = styled.div`
  position: absolute;
  top: 7px;
  left: 50%;
  display: grid;
  grid-template-columns: repeat(14, 26px);
  grid-auto-rows: 24px;
  padding: 3px 4px;
  border: 1px solid #a2a7aa;
  background: #fcfcfd;
  transform: translateX(-50%);
`;

const FlyoutButton = styled(IconButton)`
  position: relative;

  &::after {
    content: "";
    position: absolute;
    right: 0;
    bottom: 1px;
    border: 2px solid #33383a;
    border-top-color: transparent;
    border-left-color: transparent;
  }
`;

const Watermark = styled.text`
  fill: #f6f6f6;
  font-family: "Liberation Serif", "Noto Sans CJK SC", serif;
  font-weight: 300;
  filter: drop-shadow(2px 1px 0 #75797e);
`;

type PostProps = { x: number; w: number; cap: [number, number, number, number]; thread: number; top: number; foot: number };

const Post = ({ x, w, cap, thread, top, foot }: PostProps) => (
  <g>
    <path
      d={`M${x} ${top}v${foot - top - 10}l15 0q${w / 2 - 15} 20 ${w - 30} 0h15V${top}z`}
      fill="url(#steel)"
    />
    <path
      d={`M${x + 5} ${thread}h${w - 6}v${top - thread}q${-(w - 6) / 2} 12 ${-(w - 6)} 0z`}
      fill="url(#brass)"
    />
    <path
      d={`M${x + 5} ${thread + 14}q50 10 ${w - 6} 0M${x + 5} ${thread + 28}q50 10 ${w - 6} 0M${x + 5} ${thread + 42}q50 10 ${w - 6} 0`}
      stroke="#8d846c"
      strokeWidth="2"
      fill="none"
    />
    <path
      d={`M${cap[0]} ${cap[1] + 8}q${(cap[2] - cap[0]) / 2} -16 ${cap[2] - cap[0]} 0V${cap[3] - 10}q${-(cap[2] - cap[0]) / 2} 22 ${-(cap[2] - cap[0])} 0z`}
      fill="url(#steel)"
    />
  </g>
);

const Knob = ({ x, y, w, h }: { x: number; y: number; w: number; h: number }) => (
  <g>
    <path d={`M${x} ${y + 10}q${w / 2} -20 ${w} 0v${h - 20}q${-w / 2} 20 ${-w} 0z`} fill="url(#brass)" />
    <path d={`M${x} ${y + 18}q${w / 2} -20 ${w} 0v${h - 32}q${-w / 2} 16 ${-w} 0z`} fill="url(#knurl)" />
    <path d={`M${x + 4} ${y + h - 10}q${w / 2} 12 ${w - 8} 0`} stroke="#cfc8b2" strokeWidth="8" fill="none" />
  </g>
);

const MoldScene = () => (
  <svg viewBox="0 0 1099 568" preserveAspectRatio="xMidYMid meet" role="img" aria-label="Exploded mold assembly">
    <defs>
      <linearGradient id="steel">
        <stop offset="0" stopColor="#0047c4" />
        <stop offset="0.150" stopColor="#0055ee" />
        <stop offset="0.550" stopColor="#005cff" />
        <stop offset="0.800" stopColor="#0054e8" />
        <stop offset="1" stopColor="#003da4" />
      </linearGradient>
      <linearGradient id="brass">
        <stop offset="0" stopColor="#9a927c" />
        <stop offset="0.450" stopColor="#c4bca4" />
        <stop offset="1" stopColor="#8f866f" />
      </linearGradient>
      <linearGradient id="shine">
        <stop offset="0" stopColor="#777c82" />
        <stop offset="0.500" stopColor="#a6a9ae" />
        <stop offset="1" stopColor="#6a6f77" />
      </linearGradient>
      <pattern id="knurl" width="10" height="10" patternUnits="userSpaceOnUse">
        <path d="M3 0v10" stroke="#8b836b" strokeWidth="2.500" />
      </pattern>
    </defs>

    <text x="478" y="13" fontSize="11" fill="#2d0b55" fontFamily="Liberation Sans, sans-serif">
      PULL DIRECTION
    </text>
    <text x="7" y="472" fontSize="9" fill="#7b8086" fontFamily="Liberation Sans, sans-serif">
      Explode State:MOLD_OPEN
    </text>

    {/* posts and base plates */}
    <g transform="translate(217 268) scale(0.3333)">
      <path d="M945 128l375 37-65 13-310-33z" fill="#004fd0" />
      <path d="M945 145l310 33 13 34-323-32z" fill="#0560ff" />
      <path d="M1255 178l65-13v35l-52 12z" fill="#5a626a" />
      <ellipse cx="1232" cy="163" rx="22" ry="5" fill="#b6c3c4" />

      <path d="M92 550l198-33 795-22 225 20-622 93z" fill="#004bc8" />
      <path d="M92 550l596 58-2 142-596-58z" fill="#a4b1c2" />
      <path d="M688 608l622-93-2 141-622 94z" fill="#575f68" />
      <path d="M745 580l105 3v72l-33 3v-68zM1075 531l107 2v73l-35 2v-68z" fill="#a4b1c2" />
      <ellipse cx="185" cy="552" rx="28" ry="5" fill="#a4b8cc" />
      <ellipse cx="303" cy="535" rx="32" ry="5" fill="#a4b8cc" />
      <ellipse cx="672" cy="601" rx="30" ry="4" fill="#a4b8cc" />
      <ellipse cx="1222" cy="515" rx="25" ry="5" fill="#a4b8cc" />
      <ellipse cx="540" cy="556" rx="34" ry="8" fill="#0058e4" />

      <path d="M97 410l165-26 208-32 470-14 372 35-452 69-165 25z" fill="#004bc8" />
      <path d="M97 410l598 57-3 86-597-58z" fill="#a4b1c2" />
      <path d="M695 467l617-94v85l-620 95z" fill="#575f68" />
      <path d="M725 435l130 7v83l-35 5v-82zM1058 386l127 6v86l-35 5v-83z" fill="#a4b1c2" />
      <ellipse cx="195" cy="411" rx="34" ry="5" fill="#a4b8cc" />
      <ellipse cx="315" cy="395" rx="40" ry="5" fill="#a4b8cc" />
      <ellipse cx="672" cy="459" rx="40" ry="5" fill="#a4b8cc" />
      <ellipse cx="1222" cy="372" rx="38" ry="6" fill="#a4b8cc" />
      <ellipse cx="535" cy="416" rx="92" ry="16" fill="#0041b0" />
      <ellipse cx="940" cy="371" rx="30" ry="9" fill="#0056dc" />
      <ellipse cx="720" cy="402" rx="30" ry="9" fill="#0056dc" />
      <ellipse cx="840" cy="384" rx="30" ry="9" fill="#0056dc" />

      <Post x={828} w={115} cap={[862, 5, 978, 108]} thread={104} top={168} foot={378} />
      <Post x={710} w={116} cap={[735, 5, 862, 128]} thread={124} top={185} foot={392} />
      <Post x={595} w={115} cap={[600, 2, 745, 145]} thread={140} top={203} foot={410} />
      <ellipse cx="664" cy="6" rx="66" ry="15" fill="#b5ad94" />
      <ellipse cx="664" cy="2" rx="58" ry="10" fill="#0048c0" />
      <path d="M604 8q60 22 120 0" stroke="#0048c0" strokeWidth="6" strokeDasharray="7 13" fill="none" />
      <Post x={472} w={120} cap={[447, 26, 630, 162]} thread={155} top={222} foot={432} />
      <ellipse cx="540" cy="25" rx="68" ry="17" fill="#b5ad94" />
      <ellipse cx="540" cy="21" rx="58" ry="11" fill="#0052dc" />
      <path d="M474 26q66 26 132 0M482 16q58-20 116 0" stroke="#0048c0" strokeWidth="7" strokeDasharray="7 13" fill="none" />

      <path d="M103 197l67-7 595 60-65 8z" fill="#004fd0" />
      <path d="M103 200l597 56v42l-597-60z" fill="#a0abb8" />
      <path d="M700 256l65-6-5 40-60 8z" fill="#5c626a" />
      <ellipse cx="200" cy="201" rx="25" ry="5" fill="#a4b8cc" />
      <ellipse cx="672" cy="250" rx="30" ry="4" fill="#a4b8cc" />
    </g>

    {/* sliders, knobs and clamping plate */}
    <g transform="translate(217 48) scale(0.3333)">
      <path d="M45 548l155-28 220-35 180-20 55-20h60v30l-75 85-320 40-275-30z" fill="#004fd6" />
      <path d="M45 562l275 33 30-12v29l-30 10-248-25-27-5z" fill="#0056e6" />
      <path d="M45 568l27 4v25l-27-5z" fill="#a0a8b0" />
      <path d="M330 575l70-15 65-45v85l-35 2-80-4z" fill="#0058ee" />
      <path d="M440 505l25 10v85l-20 3z" fill="#0047c0" />
      <path d="M465 560v-45l30-30h110v55z" fill="#0053dd" />
      <path d="M465 548h145v14l-30 18-20 5-95-7z" fill="#0053dd" />
      <path d="M535 548l78-8v14l-60 4z" fill="#d8d5c8" />

      <path d="M640 540l350-40 170-12 90 10 10 45 160 24v8l-460 70-160 15-170-10v-16h10z" fill="#0050dc" />
      <path d="M642 566h160l18 62-178 4z" fill="#0058ee" />
      <path d="M820 585l180-65 190-10 50 30-40 24-140 18-100 10-90 16-48 4z" fill="url(#shine)" />
      <path d="M840 500l100-8 60 14-60 18-110 4z" fill="#a9aba6" />
      <path d="M985 545l15 15v30l-30 2z" fill="#d6d4d0" />
      <path d="M1190 500h60l10 50h-50z" fill="#0048c4" />
      <path d="M960 645l455-70v30l-455 75z" fill="#5b636d" />
      <path d="M885 657l75-12v35l-75 2z" fill="#a3a8ad" />
      <ellipse cx="920" cy="622" rx="25" ry="5" fill="#0060ff" />

      <Knob x={832} y={420} w={128} h={78} />
      <Knob x={715} y={438} w={120} h={100} />
      <Knob x={605} y={455} w={112} h={90} />
      <Knob x={487} y={473} w={115} h={78} />
      <path d="M655 448q30-8 60 0l-5 10h-50zM555 472l42-7v14z" fill="#0050dc" />

      {/* leader pins */}
      <path d="M322 316h54l-26 112-8 10-22 18-21-18 1-22z" fill="url(#steel)" />
      <path d="M634 342h50l-10 40-26 23-20-22z" fill="url(#steel)" />
      <path d="M738 340h56l22 120-4 28-20 8-24-12z" fill="url(#steel)" />
      <path d="M1070 290h49l26 120-14 43-8 2-28-34z" fill="url(#steel)" />

      {/* top plate */}
      <path d="M120 124l620-92 597 57-619 94z" fill="#808b98" />
      <path d="M120 124l598 59-1 169-599-59z" fill="#a4b1c4" />
      <path d="M718 183l619-94-2 169-618 94z" fill="#575f69" />
      <g fill="#939ea2">
        <ellipse cx="220" cy="127" rx="38" ry="5" />
        <ellipse cx="710" cy="172" rx="40" ry="6" />
        <ellipse cx="1255" cy="88" rx="42" ry="5" />
        <ellipse cx="775" cy="40" rx="34" ry="4" />
        <circle cx="558" cy="132" r="5" />
        <circle cx="673" cy="116" r="5" />
        <circle cx="792" cy="97" r="5" />
        <circle cx="905" cy="79" r="4" />
      </g>
      <g fill="#708bb0" stroke="#1552bd" strokeWidth="3">
        <ellipse cx="405" cy="118" rx="26" ry="4" />
        <ellipse cx="720" cy="148" rx="27" ry="4" />
        <ellipse cx="740" cy="66" rx="29" ry="4" />
        <ellipse cx="1052" cy="97" rx="26" ry="4" />
      </g>
      <path d="M735 36h32v19h-32z" fill="#756b90" />
      <path d="M731-30v62l4 23h32l3-25v-60M739-30v66M763-30v66" stroke="#32106a" strokeWidth="4" fill="none" />

      {/* spin center */}
      <path d="M733 664v52" stroke="#20e070" strokeWidth="4" />
      <path d="M733 716l40 3" stroke="#d6f6ff" strokeWidth="4" />
      <circle cx="733" cy="664" r="8" fill="#20e070" />
      <circle cx="757" cy="711" r="8" fill="#a5387c" />
      <circle cx="774" cy="720" r="9" fill="#50e4f8" />
    </g>

    <Watermark x="146" y="238" fontSize="56">
      莫西网
    </Watermark>
    <Watermark y="237" fontSize="50">
      <tspan x="312">www.</tspan>
      <tspan x="432">3dmox.</tspan>
      <tspan x="607">com</tspan>
    </Watermark>
  </svg>
);

/* status bar */

const StatusBar = styled.footer`
  display: flex;
  flex: none;
  height: 34px;
  padding: 4px 15px 0 4px;
  border-top: 1px solid #a9b0b3;
  background: #fafbfc;
`;

const StatusCell = styled.div<{ $w?: number; $low?: boolean }>`
  display: flex;
  align-items: ${({ $low }) => ($low ? "flex-end" : "center")};
  width: ${({ $w }) => ($w ? `${$w}px` : "auto")};
  padding: 0 2px;
  border-right: 1px solid #b0b5b7;
`;

const Toggle = styled(IconButton)`
  width: 24px;
  height: 22px;
  margin-right: 2px;
`;

const Message = styled.p`
  flex: 1;
  margin: 0;
  padding: 4px 0 0 6px;
  font-size: 11px;

  &::before {
    content: "●";
    margin-right: 4px;
    font-size: 6px;
    vertical-align: 2px;
    color: #1c6575;
  }
`;

const SplitBox = styled.div`
  display: flex;
  align-items: center;
  height: 24px;
  border: 1px solid #b6bbbd;

  button + button {
    border-left: 1px solid #b6bbbd;
  }
`;

const SelectBox = styled.label`
  display: grid;
  grid-template-columns: 147px 15px;
  height: 23px;
  margin: 3px 0 0 90px;
  border: 1px solid #8d9395;

  select {
    grid-area: 1 / 1 / 2 / 3;
    padding: 0 7px;
    border: none;
    background: none;
    appearance: none;
  }

  > span {
    grid-area: 1 / 2 / 2 / 3;
    display: flex;
    align-items: center;
    justify-content: center;
    border-left: 1px solid #8d9395;
    pointer-events: none;
  }
`;

const tabs = [
  "File",
  "Mold",
  "Analysis",
  "Model",
  "Annotate",
  "Tools",
  "View",
  "Applications",
  "EMX Manufacturing Mode",
  "Common"
];

export default function App() {
  const [tab, setTab] = useState("View");
  const [filter, setFilter] = useState("");

  return (
    <Page>
      <GlobalStyle />
      <TitleBar>
        <QuickTools>
          <Brand>
            <CreoLogo />
            creo°
          </Brand>
          <ToolButton $w={28} aria-label="New"><FileIcon /></ToolButton>
          <ToolButton $w={20} aria-label="Measure"><RulerIcon /></ToolButton>
          <ToolButton $w={16} aria-label="Measure options"><Caret /></ToolButton>
          <ToolButton aria-label="Close file"><CloseFileIcon /></ToolButton>
          <ToolButton aria-label="Regenerate"><RegenIcon /></ToolButton>
          <ToolButton aria-label="Open"><OpenIcon /></ToolButton>
          <ToolButton aria-label="Save"><SaveIcon /></ToolButton>
          <ToolButton aria-label="Undo"><UndoIcon /></ToolButton>
          <ToolButton $w={14} aria-label="Undo list"><Caret $light /></ToolButton>
          <ToolButton aria-label="Redo"><UndoIcon flip /></ToolButton>
          <ToolButton $w={14} aria-label="Redo list"><Caret $light /></ToolButton>
          <ToolButton aria-label="Regeneration Manager"><RegenListIcon /></ToolButton>
          <ToolButton aria-label="Windows"><WindowsSmallIcon /></ToolButton>
          <ToolButton $w={14} aria-label="Window list"><Caret /></ToolButton>
          <ToolButton aria-label="Close window"><CloseXIcon /></ToolButton>
          <ToolButton aria-label="Customize">
            <Icon>
              <path d="M5 5.500h8" />
              <path d="M5 8h8l-4 5z" fill="#33383a" stroke="none" />
            </Icon>
          </ToolButton>
        </QuickTools>
        <TitleText>CROWN_CAP (Active) - Creo Parametric 6.0</TitleText>
        <WindowControls>
          <ToolButton $w={28} aria-label="Minimize">
            <Icon><path d="M5 11h9" strokeWidth="2" /></Icon>
          </ToolButton>
          <ToolButton $w={28} aria-label="Restore">
            <Icon><path d="M6.500 6.500v-3h8v6h-3M3.500 6.500h8v6h-8zM4 8.500h7M7 4.500h7" /></Icon>
          </ToolButton>
          <ToolButton $w={26} aria-label="Close">
            <Icon><path d="M5 5l8 8m0-8l-8 8" strokeWidth="2" /></Icon>
          </ToolButton>
        </WindowControls>
      </TitleBar>

      <TabBar>
        {tabs.map(name => (
          <Tab
            key={name}
            onClick={() => setTab(name)}
            $kind={name === "File" ? "file" : name === tab ? "active" : undefined}
          >
            {name}
          </Tab>
        ))}
        <TabTools>
          <ToolButton $w={22} aria-label="Minimize ribbon">
            <Icon><path d="M4 9l5-5 5 5-5-2z" fill="#fff" stroke="#fff" /></Icon>
          </ToolButton>
          <ToolButton aria-label="Search">
            <Icon>
              <circle cx="10" cy="7" r="4.500" fill="#c9d3d6" stroke="#eef1f2" />
              <path d="M2 14q5 1 6-3" stroke="#9aa0a2" strokeWidth="2" />
            </Icon>
          </ToolButton>
          <ToolButton aria-label="Learning">
            <Icon>
              <path d="M2 7l7-3 7 3-7 3zM5 10v3q4 2 8 0v-3l-4 2z" fill="#fff" stroke="none" />
            </Icon>
          </ToolButton>
          <ToolButton $w={18} aria-label="Learning options">
            <Icon size={10} box={10}><path d="M1 3h8L5 7z" fill="#fff" stroke="none" /></Icon>
          </ToolButton>
          <ToolButton $w={16} aria-label="Help"><b>?</b></ToolButton>
        </TabTools>
      </TabBar>

      <Ribbon>
        <Group $w={124}>
          <GroupBody>
            <BigTool w={46} icon={<LayersIcon />} lines={["Layers"]} />
            <Column>
              <SmallButton aria-label="Hide"><HideIcon /></SmallButton>
              <SmallButton aria-label="Show"><ShowIcon /><Caret /></SmallButton>
              <SmallButton aria-label="Save status"><EyeSaveIcon /><Caret /></SmallButton>
            </Column>
            <Column>
              <SmallButton aria-label="Status"><StatusEyeIcon /></SmallButton>
              <SmallButton aria-label="Hide body"><BlockHiddenIcon /><Caret /></SmallButton>
              <SmallButton aria-label="Show body"><CurvedBlockIcon /></SmallButton>
            </Column>
          </GroupBody>
          <GroupLabel>Visibility</GroupLabel>
        </Group>

        <Group $w={127}>
          <GroupBody>
            <BigTool w={50} icon={<ScenesIcon />} lines={["Scenes"]} caret="below" />
            <BigTool w={70} icon={<SphereIcon />} lines={["Appearances"]} caret="below" />
          </GroupBody>
          <GroupLabel>Appearance <Caret /></GroupLabel>
        </Group>

        <Group $w={439}>
          <GroupBody>
            <BigTool w={46} icon={<RefitIcon />} lines={["Refit"]} />
            <BigTool w={48} icon={<ZoomSelectedIcon />} lines={["Zoom to", "Selected"]} disabled />
            <BigTool w={46} icon={<ZoomInIcon />} lines={["Zoom", "In"]} />
            <Column>
              <SmallButton><PanIcon />Pan</SmallButton>
              <SmallButton><ZoomOutIcon />Zoom Out</SmallButton>
              <SmallButton><PanZoomIcon />Pan Zoom</SmallButton>
            </Column>
            <Divider />
            <BigTool w={90} icon={<SavedOrientationIcon />} lines={["Saved", "Orientations"]} caret="inline" />
            <BigTool w={62} icon={<StandardOrientationIcon />} lines={["Standard", "Orientation"]} />
            <BigTool w={58} icon={<PreviousIcon />} lines={["Previous"]} />
          </GroupBody>
          <GroupLabel>Orientation <Caret /></GroupLabel>
        </Group>

        <Group $w={334}>
          <GroupBody>
            <BigTool w={56} icon={<ManageViewsIcon />} lines={["Manage", "Views"]} caret="inline" />
            <BigTool w={43} icon={<SectionIcon />} lines={["Section"]} caret="below" />
            <Column>
              <SmallButton $pressed><ExplodedIcon />Exploded View</SmallButton>
              <SmallButton disabled><ToggleStatusIcon />Toggle Status</SmallButton>
              <SmallButton><EditPositionIcon />Edit Position</SmallButton>
            </Column>
            <Divider />
            <BigTool w={55} icon={<DisplayStyleIcon />} lines={["Display", "Style"]} caret="inline" />
            <BigTool w={60} icon={<PerspectiveIcon />} lines={["Perspective", "View"]} disabled />
          </GroupBody>
          <GroupLabel>Model Display <Caret /></GroupLabel>
        </Group>

        <Group $w={151}>
          <GroupBody>
            <ShowGrid>
              {showTools.map(([name, icon, pressed]) => (
                <IconButton key={name} aria-label={name} $pressed={pressed}>
                  {icon}
                </IconButton>
              ))}
            </ShowGrid>
          </GroupBody>
          <GroupLabel>Show <Caret /></GroupLabel>
        </Group>

        <Group $w={166}>
          <GroupBody>
            <BigTool w={56} icon={<ActivateIcon />} lines={["Activate"]} />
            <BigTool w={38} icon={<CloseBigIcon />} lines={["Close"]} />
            <Divider />
            <BigTool w={66} icon={<WindowsIcon />} lines={["Windows"]} caret="below" />
          </GroupBody>
          <GroupLabel>Window <Caret /></GroupLabel>
        </Group>
      </Ribbon>

      <Workspace>
        <SidePanel>
          <PanelTabs>
            <PanelTab $w={100} $active>
              <TreeIcon />
              <PanelTabText>Model Tree</PanelTabText>
            </PanelTab>
            <PanelTab $w={79}>
              <FoldersIcon />
              <PanelTabText $fade>Folder Browser</PanelTabText>
            </PanelTab>
            <PanelTab $w={78}>
              <FoldersIcon star />
              <PanelTabText $fade>Favorites</PanelTabText>
            </PanelTab>
          </PanelTabs>
          <PanelHead>
            <h2>Model Tree</h2>
            <ToolButton aria-label="Tree settings"><ToolsIcon /></ToolButton>
            <ToolButton $w={18} aria-label="Settings list"><Caret /></ToolButton>
            <ToolButton aria-label="Show"><ListPageIcon /></ToolButton>
            <ToolButton $w={18} aria-label="Show list"><Caret /></ToolButton>
            <ToolButton $w={32} aria-label="Hidden items"><TreeHiddenIcon /></ToolButton>
          </PanelHead>
          <FilterRow>
            <FunnelIcon />
            <FilterBox>
              <input aria-label="Filter tree" value={filter} onChange={e => setFilter(e.target.value)} />
              <ToolButton $w={18} aria-label="Clear filter" onClick={() => setFilter("")}>
                <Icon><path d="M5 5l8 8m0-8l-8 8" stroke="#9aa0a2" /></Icon>
              </ToolButton>
            </FilterBox>
            <ToolButton $w={20} aria-label="Filter options"><Caret /></ToolButton>
            <ToolButton $w={22} aria-label="Add">
              <Icon><path d="M9 3.500v11M3.500 9h11" stroke="#9aa0a2" strokeWidth="3" /></Icon>
            </ToolButton>
          </FilterRow>
          <TreeArea>
            <Tree>
              {splits.map(name => (
                <Row key={name}>
                  <Expander $hidden />
                  <SplitIcon />
                  <RowLabel>{name}</RowLabel>
                </Row>
              ))}
              {parts.map(name => (
                <Row key={name}>
                  <Expander />
                  <PartIcon />
                  <RowLabel>{name}</RowLabel>
                </Row>
              ))}
              <InsertLine />
            </Tree>
            <Scrollbar $vertical>
              <ScrollEnd aria-label="Scroll up"><Arrow turn={180} /></ScrollEnd>
              <Track $grow={78} />
              <Thumb $grow={22} />
              <ScrollEnd aria-label="Scroll down"><Arrow turn={0} /></ScrollEnd>
            </Scrollbar>
            <Scrollbar>
              <ScrollEnd aria-label="Scroll left"><Arrow turn={90} /></ScrollEnd>
              <Thumb $grow={64} />
              <Track $grow={36} />
              <ScrollEnd aria-label="Scroll right"><Arrow turn={-90} /></ScrollEnd>
            </Scrollbar>
          </TreeArea>
        </SidePanel>

        <Viewport>
          <MoldScene />
          <FloatingBar>
            <IconButton aria-label="Refit"><RefitSmallIcon /></IconButton>
            <IconButton aria-label="Zoom In"><ZoomInSmallIcon /></IconButton>
            <IconButton aria-label="Zoom Out"><ZoomOutIcon /></IconButton>
            <IconButton aria-label="Repaint"><ShadeIcon /></IconButton>
            <FlyoutButton aria-label="Display Style"><MiniCube /></FlyoutButton>
            <FlyoutButton aria-label="Saved Orientations"><MiniCube list /></FlyoutButton>
            <IconButton aria-label="View Manager"><ManageSmallIcon /></IconButton>
            <FlyoutButton aria-label="Datum Display Filters"><DatumIcon /></FlyoutButton>
            <IconButton aria-label="Annotation Display"><NoteEyeIcon /></IconButton>
            <IconButton aria-label="Show body"><CurvedBlockIcon /></IconButton>
            <IconButton aria-label="Pull Direction" $pressed><PullIcon /></IconButton>
            <IconButton aria-label="Spin Center" $pressed><SpinCenterIcon /></IconButton>
            <FlyoutButton aria-label="Appearance"><SnakeIcon /></FlyoutButton>
            <IconButton aria-label="Status"><StatusEyeIcon /></IconButton>
          </FloatingBar>
        </Viewport>
      </Workspace>

      <StatusBar>
        <StatusCell $w={86} $low>
          <Toggle aria-label="Model tree" $pressed><TreeIcon /></Toggle>
          <Toggle aria-label="Browser"><BrowserIcon /></Toggle>
          <Toggle aria-label="Full screen"><SquareIcon /></Toggle>
        </StatusCell>
        <Message>IGES file crown_cap_asm.igs has been created.</Message>
        <StatusCell />
        <StatusCell $w={41} />
        <StatusCell $w={47}>
          <SplitBox>
            <ToolButton $w={27} aria-label="Find"><BinocularsIcon /></ToolButton>
            <ToolButton $w={14} aria-label="Find options"><Caret /></ToolButton>
          </SplitBox>
        </StatusCell>
        <SelectBox>
          <select aria-label="Selection filter" defaultValue="Geometry">
            <option>Geometry</option>
            <option>Part</option>
            <option>Feature</option>
          </select>
          <span><Caret /></span>
        </SelectBox>
      </StatusBar>
    </Page>
  );
}
